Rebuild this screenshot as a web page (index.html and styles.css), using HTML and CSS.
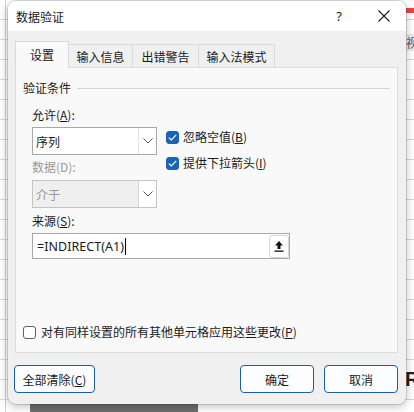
FILE: index.html
```html
<!DOCTYPE html>
<html lang="zh-CN">
<head>
<meta charset="utf-8">
<title>数据验证</title>
<link rel="stylesheet" href="styles.css">
</head>
<body>
<div class="sheet">
  <div class="redbar"></div>
  <div class="edge-text">视</div>
  <div class="dark-block"></div>
  <div class="edge-glyph">R</div>
</div>
<div class="dialog">
  <div class="titlebar">
    <span class="title">数据验证</span>
    <span class="help">?</span>
    <span class="close">
      <svg width="12" height="12" viewBox="0 0 12 12"><path d="M0.5 0.5L11.5 11.5M11.5 0.5L0.5 11.5" stroke="#1a1a1a" stroke-width="1.1" fill="none"/></svg>
    </span>
  </div>
  <div class="body">
    <div class="tabs">
      <div class="tab active">设置</div>
      <div class="tab">输入信息</div>
      <div class="tab">出错警告</div>
      <div class="tab">输入法模式</div>
    </div>
    <div class="panel">
      <div class="group-head"><span>验证条件</span><span class="rule"></span></div>
      <div class="field-label">允许(<u>A</u>):</div>
      <div class="allow-row">
        <div class="left-col">
          <div class="select">
            <span class="select-value">序列</span>
            <span class="select-btn"><svg width="10" height="6" viewBox="0 0 10 6"><path d="M0.5 0.5L5 5L9.5 0.5" stroke="#555" stroke-width="1" fill="none"/></svg></span>
          </div>
          <div class="field-label disabled data-label">数据(D):</div>
          <div class="select disabled-select">
            <span class="select-value">介于</span>
            <span class="select-btn"><svg width="10" height="6" viewBox="0 0 10 6"><path d="M0.5 0.5L5 5L9.5 0.5" stroke="#555" stroke-width="1" fill="none"/></svg></span>
          </div>
        </div>
        <div class="right-col">
          <label class="check"><span class="box checked"><svg width="9" height="7" viewBox="0 0 9 7"><path d="M0.8 3.6L3.3 6L8.2 0.9" stroke="#fff" stroke-width="1.2" fill="none"/></svg></span>忽略空值(<u>B</u>)</label>
          <label class="check"><span class="box checked"><svg width="9" height="7" viewBox="0 0 9 7"><path d="M0.8 3.6L3.3 6L8.2 0.9" stroke="#fff" stroke-width="1.2" fill="none"/></svg></span>提供下拉箭头(<u>I</u>)</label>
        </div>
      </div>
      <div class="field-label source-label">来源(<u>S</u>):</div>
      <div class="source">
        <span class="source-text">=INDIRECT(A1)</span><span class="caret"></span>
        <span class="pick-btn"><svg width="10" height="12" viewBox="0 0 10 12"><path d="M5 1L1 5.5H3.5V9H6.5V5.5H9Z" fill="#111"/><rect x="0.5" y="10.5" width="9" height="1.3" fill="#111"/></svg></span>
      </div>
      <label class="check apply"><span class="box"></span>对有同样设置的所有其他单元格应用这些更改(<u>P</u>)</label>
    </div>
    <div class="footer">
      <button class="btn clear">全部清除(<u>C</u>)</button>
      <span class="spacer"></span>
      <button class="btn">确定</button>
      <button class="btn">取消</button>
    </div>
  </div>
</div>
</body>
</html>
```
FILE: styles.css
```css
html, body {
  margin: 0;
  padding: 0;
}
body {
  width: 414px;
  height: 412px;
  overflow: hidden;
  position: relative;
  font-family: "Noto Sans CJK SC", "Noto Sans", sans-serif;
  font-size: 12px;
  color: #1a1a1a;
  background-color: #ffffff;
}
.sheet {
  position: absolute;
  inset: 0;
  background-image:
    repeating-linear-gradient(to bottom, transparent 0, transparent 19px, #d8d8d8 19px, #d8d8d8 20px),
    linear-gradient(to right, transparent 0, transparent 5px, #d0d0d0 5px, #d0d0d0 6px, transparent 6px);
}
.redbar {
  position: absolute;
  left: 404px;
  top: 8px;
  width: 10px;
  height: 5px;
  background: #e04a3f;
}
.edge-text {
  position: absolute;
  left: 406px;
  top: 34px;
  font-size: 12px;
  color: #555;
  background: #e8e8f0;
}
.dark-block {
  position: absolute;
  left: 30px;
  top: 400px;
  width: 168px;
  height: 12px;
  background: #6d6d6d;
}
.edge-glyph {
  position: absolute;
  left: 405px;
  top: 368px;
  font-family: "Liberation Sans", sans-serif;
  font-weight: bold;
  font-size: 20px;
  color: #222;
}
.dialog {
  position: absolute;
  left: 8px;
  top: 1px;
  width: 398px;
  height: 403px;
  border-radius: 8px;
  overflow: hidden;
  background: #f0f0f0;
  box-shadow: 0 2px 10px rgba(0,0,0,0.28), 0 0 0 1px rgba(0,0,0,0.12);
  display: flex;
  flex-direction: column;
}
.titlebar {
  height: 30px;
  background: #ffffff;
  display: flex;
  align-items: center;
  padding-left: 8px;
  flex: none;
}
.title {
  font-size: 12px;
  flex: 1;
}
.help {
  font-family: "Noto Sans", sans-serif;
  font-size: 13px;
  width: 14px;
  margin-right: 32px;
  text-align: center;
}
.close {
  width: 12px;
  height: 12px;
  margin-right: 16px;
  display: flex;
}
.body {
  flex: 1;
  padding: 10px 8px 0 7px;
  display: flex;
  flex-direction: column;
}
.tabs {
  height: 26px;
  display: flex;
  align-items: flex-end;
  position: relative;
  z-index: 1;
}
.tab {
  height: 23px;
  box-sizing: border-box;
  border: 1px solid #dadada;
  border-left: none;
  border-bottom: none;
  background: #f0f0f0;
  padding: 0 9px;
  display: flex;
  align-items: center;
  justify-content: center;
}
.tab.active {
  height: 27px;
  margin-bottom: -1px;
  border-left: 1px solid #dadada;
  background: #f9f9f9;
  width: 54px;
  padding: 0;
  padding-bottom: 2px;
}
.tab:nth-child(2) { width: 64px; padding: 0; }
.tab:nth-child(3) { width: 66px; padding: 0; }
.tab:nth-child(4) { width: 76px; padding: 0; }
.panel {
  height: 286px;
  box-sizing: border-box;
  border: 1px solid #dcdcdc;
  background: #f9f9f9;
  padding: 12px 7px 12px 7px;
  display: flex;
  flex-direction: column;
}
.group-head {
  display: flex;
  align-items: center;
  height: 16px;
  line-height: 16px;
}
.group-head .rule {
  flex: 1;
  height: 1px;
  background: #d5d5d5;
  margin-left: 6px;
  margin-right: 0;
}
.field-label {
  height: 16px;
  line-height: 16px;
  margin-left: 9px;
  margin-top: 11px;
}
.disabled {
  color: #9a9a9a;
}
.allow-row {
  display: flex;
  margin-left: 9px;
  margin-top: 4px;
  gap: 9px;
}
.left-col {
  display: flex;
  flex-direction: column;
  width: 125px;
}
.left-col .data-label {
  margin: 4px 0 0 0;
}
.select {
  height: 28px;
  box-sizing: border-box;
  border: 1px solid #a8a8a8;
  background: #ffffff;
  display: flex;
  align-items: center;
}
.select-value {
  flex: 1;
  padding-left: 3px;
  font-size: 12px;
}
.select-btn {
  width: 17px;
  height: 26px;
  border-left: 1px solid #e3e3e3;
  display: flex;
  align-items: center;
  justify-content: center;
}
.disabled-select {
  margin-top: 5px;
  background: #efefef;
  border-color: #c4c4c4;
  color: #9a9a9a;
}
.disabled-select .select-btn {
  background: #ffffff;
  border-left: 1px solid #d8d8d8;
}
.right-col {
  display: flex;
  flex-direction: column;
  gap: 10px;
  padding-top: 2px;
}
.check {
  display: flex;
  align-items: center;
  height: 16px;
  line-height: 16px;
  white-space: nowrap;
}
.box {
  width: 13px;
  height: 13px;
  box-sizing: border-box;
  border-radius: 3px;
  border: 1px solid #5f5f5f;
  background: #ffffff;
  margin-right: 4px;
  display: flex;
  align-items: center;
  justify-content: center;
  flex: none;
}
.box.checked {
  background: #1a64b8;
  border-color: #1a64b8;
}
.source-label {
  margin-top: 5px;
}
.source {
  margin-left: 9px;
  margin-top: 4px;
  width: 258px;
  height: 26px;
  box-sizing: border-box;
  border: 1px solid #a8a8a8;
  background: #ffffff;
  display: flex;
  align-items: center;
  padding-left: 4px;
}
.source-text {
  font-family: "Noto Sans", sans-serif;
  font-size: 12.5px;
  letter-spacing: 0.05px;
}
.caret {
  width: 1px;
  height: 17px;
  background: #000;
  margin-left: 1px;
}
.pick-btn {
  margin-left: auto;
  width: 20px;
  height: 23px;
  box-sizing: border-box;
  border: 1px solid #d6d6d6;
  border-radius: 3px;
  background: #fff;
  display: flex;
  align-items: center;
  justify-content: center;
  margin-right: 0;
}
.apply {
  margin-top: auto;
}
.apply .box {
  margin-right: 5px;
}
.footer {
  display: flex;
  margin-top: 12px;
  margin-left: -1px;
  gap: 10px;
}
.spacer {
  flex: 1;
}
.btn {
  height: 28px;
  width: 74px;
  box-sizing: border-box;
  border: 1px solid #1a5fa6;
  border-radius: 4px;
  background: #fbfdff;
  font-family: "Noto Sans CJK SC", "Noto Sans", sans-serif;
  font-size: 12px;
  color: #1a1a1a;
  padding: 0;
}
.btn.clear {
  width: 81px;
}
```
